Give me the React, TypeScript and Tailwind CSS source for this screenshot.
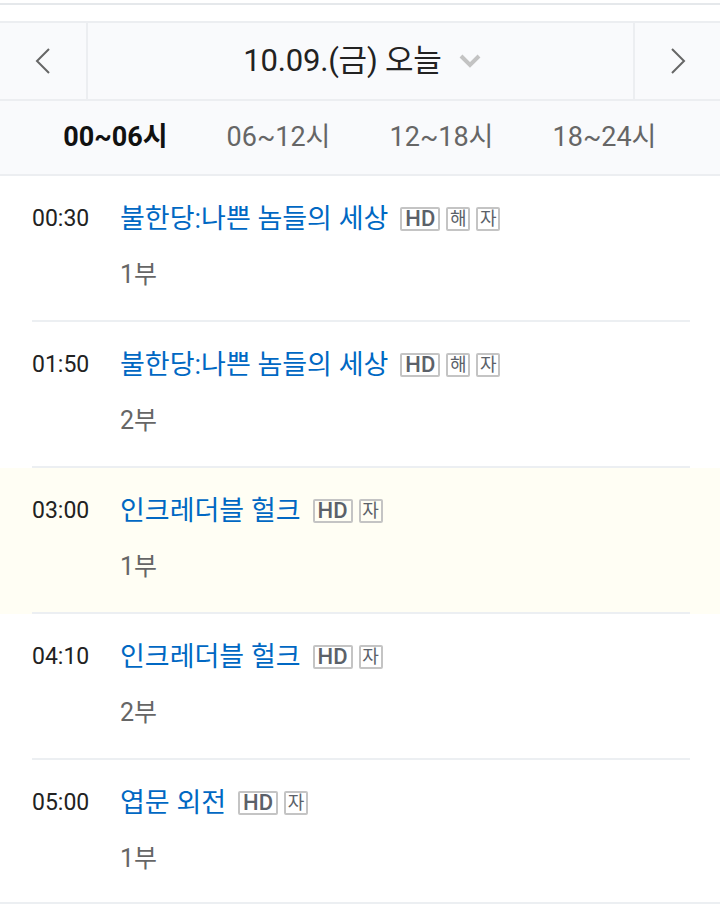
import React from "react";

const font = { fontFamily: 'Roboto, "Noto Sans CJK KR", "Noto Sans", sans-serif' };

type Item = { time: string; title: string; ep: string; badges: string[]; hl?: boolean };

const items: Item[] = [
  { time: "00:30", title: "불한당:나쁜 놈들의 세상", ep: "1부", badges: ["HD", "해", "자"] },
  { time: "01:50", title: "불한당:나쁜 놈들의 세상", ep: "2부", badges: ["HD", "해", "자"] },
  { time: "03:00", title: "인크레더블 헐크", ep: "1부", badges: ["HD", "자"], hl: true },
  { time: "04:10", title: "인크레더블 헐크", ep: "2부", badges: ["HD", "자"] },
  { time: "05:00", title: "엽문 외전", ep: "1부", badges: ["HD", "자"] },
];

function Badge({ t }: { t: string }) {
  const hd = t === "HD";
  return (
    <span
      className={
        "inline-flex h-[24px] items-center justify-center rounded-[2px] border-2 border-[#c4c4c4] text-[#5b6169] leading-none " +
        (hd ? "w-[40px] text-[22px] font-medium" : "w-[24px] text-[18px]")
      }
    >
      {t}
    </span>
  );
}

export default function App() {
  return (
    <div className="w-[720px] bg-white" style={font}>
      <div className="h-[3px]" />
      <div className="h-[2px] bg-[#e5e8eb]" />
      <div className="h-[16px]" />
      <div className="flex h-[80px] border-y-2 border-[#eceef1] bg-[#f9fafc]">
        <div className="flex w-[88px] items-center justify-center border-r-2 border-[#eceef1]">
          <svg width="18" height="28" viewBox="0 0 18 28" fill="none">
            <path d="M15 2 L3 14 L15 26" stroke="#666" strokeWidth="2" />
          </svg>
        </div>
        <div className="flex flex-1 items-center justify-center gap-[16px] pl-[4px]">
          <span className="text-[31px] text-[#222] tracking-[-0.2px]">10.09.(금) 오늘</span>
          <svg width="24" height="16" viewBox="0 0 24 16" fill="none">
            <path d="M3 3 L12 12 L21 3" stroke="#c3c3c3" strokeWidth="4" />
          </svg>
        </div>
        <div className="flex w-[87px] items-center justify-center border-l-2 border-[#eceef1]">
          <svg width="18" height="28" viewBox="0 0 18 28" fill="none">
            <path d="M3 2 L15 14 L3 26" stroke="#666" strokeWidth="2" />
          </svg>
        </div>
      </div>
      <div className="grid h-[75px] grid-cols-4 items-center border-b-2 border-[#eceef1] bg-[#f9fafc] px-[34px] text-[27px]">
        <div className="text-center font-bold text-[#111]">00~06시</div>
        <div className="text-center text-[#666]">06~12시</div>
        <div className="text-center text-[#666]">12~18시</div>
        <div className="text-center text-[#666]">18~24시</div>
      </div>
      {items.map((it, i) => {
        const last = i === items.length - 1;
        return (
          <div
            key={i}
            className={(it.hl ? "bg-[#fffef4]" : "bg-white") + (last ? " border-b-2 border-[#eceff2]" : "")}
          >
            <div
              className={
                "ml-[32px] mr-[30px] flex pt-[26px] " +
                (last ? "h-[142px]" : "h-[146px] border-b-2 border-[#eceff2]")
              }
            >
              <div className="w-[88px] text-[23px] leading-[34px] text-[#222]">{it.time}</div>
              <div className="flex flex-col">
                <div className="flex items-center gap-[6px]">
                  <span className="mr-[6px] text-[27px] leading-[34px] text-[#0068c3]">{it.title}</span>
                  {it.badges.map((b) => (
                    <Badge key={b} t={b} />
                  ))}
                </div>
                <div className="mt-[22px] text-[25px] leading-[34px] text-[#666]">{it.ep}</div>
              </div>
            </div>
          </div>
        );
      })}
    </div>
  );
}
